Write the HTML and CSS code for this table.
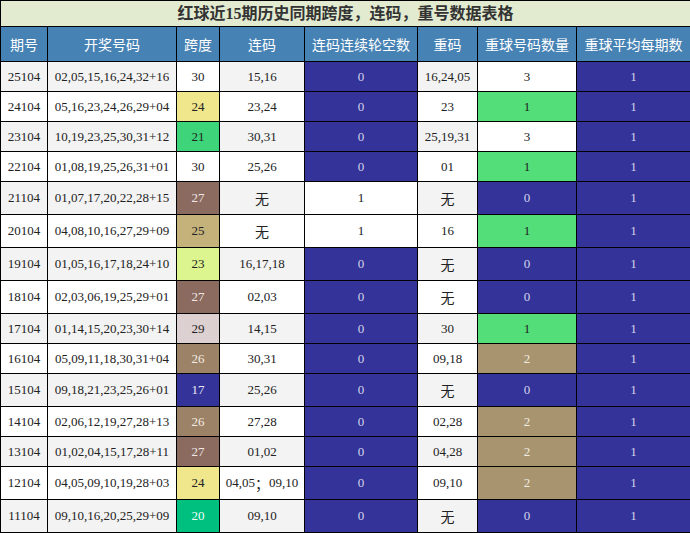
FILE: index.html
```html
<!DOCTYPE html>
<html lang="zh-CN">
<head>
<meta charset="utf-8">
<title>红球近15期历史同期跨度，连码，重号数据表格</title>
<link rel="stylesheet" href="styles.css">
</head>
<body>
<table class="data">
  <colgroup>
    <col class="w-issue"><col class="w-draw"><col class="w-span"><col class="w-link"><col class="w-gap"><col class="w-rep"><col class="w-cnt"><col class="w-avg">
  </colgroup>
  <thead>
    <tr><th class="title" colspan="8">红球近15期历史同期跨度，连码，重号数据表格</th></tr>
    <tr class="head">
      <th>期号</th><th>开奖号码</th><th>跨度</th><th>连码</th><th>连码连续轮空数</th><th>重码</th><th>重球号码数量</th><th>重球平均每期数</th>
    </tr>
  </thead>
  <tbody>
    <tr><td>25104</td><td>02,05,15,16,24,32+16</td><td class="s30">30</td><td>15,16</td><td class="blue">0</td><td>16,24,05</td><td class="white">3</td><td class="blue">1</td></tr>
    <tr><td>24104</td><td>05,16,23,24,26,29+04</td><td class="s24">24</td><td>23,24</td><td class="blue">0</td><td>23</td><td class="green">1</td><td class="blue">1</td></tr>
    <tr><td>23104</td><td>10,19,23,25,30,31+12</td><td class="s21">21</td><td>30,31</td><td class="blue">0</td><td>25,19,31</td><td class="white">3</td><td class="blue">1</td></tr>
    <tr><td>22104</td><td>01,08,19,25,26,31+01</td><td class="s30">30</td><td>25,26</td><td class="blue">0</td><td>01</td><td class="green">1</td><td class="blue">1</td></tr>
    <tr class="tall"><td>21104</td><td>01,07,17,20,22,28+15</td><td class="s27">27</td><td><span class="cjk">无</span></td><td class="white">1</td><td><span class="cjk">无</span></td><td class="blue">0</td><td class="blue">1</td></tr>
    <tr class="tall"><td>20104</td><td>04,08,10,16,27,29+09</td><td class="s25">25</td><td><span class="cjk">无</span></td><td class="white">1</td><td>16</td><td class="green">1</td><td class="blue">1</td></tr>
    <tr class="tall"><td>19104</td><td>01,05,16,17,18,24+10</td><td class="s23">23</td><td>16,17,18</td><td class="blue">0</td><td><span class="cjk">无</span></td><td class="blue">0</td><td class="blue">1</td></tr>
    <tr class="tall"><td>18104</td><td>02,03,06,19,25,29+01</td><td class="s27">27</td><td>02,03</td><td class="blue">0</td><td><span class="cjk">无</span></td><td class="blue">0</td><td class="blue">1</td></tr>
    <tr><td>17104</td><td>01,14,15,20,23,30+14</td><td class="s29">29</td><td>14,15</td><td class="blue">0</td><td>30</td><td class="green">1</td><td class="blue">1</td></tr>
    <tr><td>16104</td><td>05,09,11,18,30,31+04</td><td class="s26">26</td><td>30,31</td><td class="blue">0</td><td>09,18</td><td class="tan">2</td><td class="blue">1</td></tr>
    <tr class="tall"><td>15104</td><td>09,18,21,23,25,26+01</td><td class="s17">17</td><td>25,26</td><td class="blue">0</td><td><span class="cjk">无</span></td><td class="blue">0</td><td class="blue">1</td></tr>
    <tr><td>14104</td><td>02,06,12,19,27,28+13</td><td class="s26">26</td><td>27,28</td><td class="blue">0</td><td>02,28</td><td class="tan">2</td><td class="blue">1</td></tr>
    <tr><td>13104</td><td>01,02,04,15,17,28+11</td><td class="s27">27</td><td>01,02</td><td class="blue">0</td><td>04,28</td><td class="tan">2</td><td class="blue">1</td></tr>
    <tr class="tall"><td>12104</td><td>04,05,09,10,19,28+03</td><td class="s24">24</td><td>04,05<span class="cjk">；</span>09,10</td><td class="blue">0</td><td>09,10</td><td class="tan">2</td><td class="blue">1</td></tr>
    <tr class="tall"><td>11104</td><td>09,10,16,20,25,29+09</td><td class="s20">20</td><td>09,10</td><td class="blue">0</td><td><span class="cjk">无</span></td><td class="blue">0</td><td class="blue">1</td></tr>
  </tbody>
</table>
</body>
</html>
```

FILE: styles.css
```css
html, body {
  margin: 0;
  padding: 0;
  background: #ffffff;
}

.data {
  border-collapse: collapse;
  table-layout: fixed;
  width: 690px;
  font-family: "Liberation Serif", "Noto Sans CJK SC", serif;
  font-size: 13px;
  color: #222222;
}

.w-issue { width: 47px; }
.w-draw { width: 129px; }
.w-span { width: 43px; }
.w-link { width: 85px; }
.w-gap { width: 113px; }
.w-rep { width: 60px; }
.w-cnt { width: 99px; }
.w-avg { width: 114px; }

.data th,
.data td {
  border: 1px solid #000000;
  text-align: center;
  white-space: nowrap;
  overflow: hidden;
}

.data .title {
  background: #e2ebd0;
  color: #333333;
  font-size: 16px;
  line-height: 23px;
  font-weight: bold;
  padding: 1px 0;
}

.head th {
  background: #4682b4;
  color: #ffffff;
  font-family: "Noto Sans CJK SC", sans-serif;
  font-weight: normal;
  font-size: 14px;
  line-height: 20px;
  padding: 7px 0;
}

.data td {
  padding: 7px 1px;
  line-height: 15px;
}

.data tr.tall td {
  padding: 8px 1px 9px;
}

.cjk {
  display: inline-block;
  vertical-align: top;
  line-height: 15px;
  height: 15px;
  font-family: "Noto Sans CJK SC", sans-serif;
  font-size: 14px;
  position: relative;
  top: 1px;
}

.data tbody tr:nth-child(odd) { background: #f3f3f3; }
.data tbody tr:nth-child(even) { background: #ffffff; }

.white { background: #ffffff; }
.blue { background: #333399; color: #d4d4ea; }
.green { background: #53de7a; color: #222222; }
.tan { background: #a8946e; color: #f0ece4; }

.s30 { background: #ffffff; }
.s24 { background: #f0e68c; }
.s21 { background: #3dd47a; }
.s27 { background: #8b6a5f; color: #f0e8e6; }
.s25 { background: #c4b27a; }
.s23 { background: #ddf58f; }
.s29 { background: #dcd0d0; }
.s26 { background: #9c8266; color: #f2ece4; }
.s17 { background: #333399; color: #e6e6f4; }
.s20 { background: #00c080; color: #f0fff8; }
```
